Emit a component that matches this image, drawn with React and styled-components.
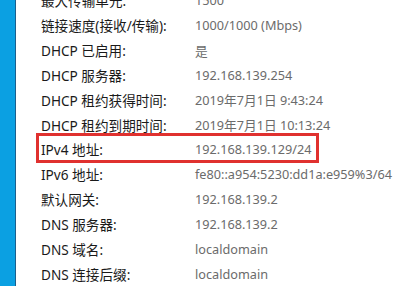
import styled, { createGlobalStyle } from "styled-components";

const GlobalStyle = createGlobalStyle`
  html, body {
    margin: 0;
    padding: 0;
    background: #ffffff;
    overflow: hidden;
  }
  body {
    font-family: "Noto Sans", "Noto Sans CJK SC", sans-serif;
  }
`;

const Window = styled.div`
  width: 406px;
  height: 286px;
  display: flex;
  overflow: hidden;
  background: #ffffff;
`;

const Strip = styled.div`
  width: 15px;
  flex-shrink: 0;
  background: #0ba0e2;
  border-right: 1px solid #1b5f8c;
`;

const Content = styled.div`
  flex: 1;
  display: flex;
  flex-direction: column;
  margin-top: -12px;
  padding-left: 25px;
`;

const Row = styled.div`
  height: 25px;
  display: grid;
  grid-template-columns: 154px 1fr;
  align-items: center;
  position: relative;
  white-space: nowrap;

  ${(props) =>
    props.$marked &&
    `
    &::after {
      content: "";
      position: absolute;
      left: -5px;
      top: -4px;
      width: 283px;
      height: 30px;
      border: 3px solid #e0312f;
      box-sizing: border-box;
    }
  `}
`;

const Label = styled.span`
  font-size: 13.6px;
  color: #1a1a1a;
`;

const Value = styled.span`
  font-size: 12.7px;
  color: #6b6b6b;
`;

const rows = [
  ["最大传输单元:", "1500"],
  ["链接速度(接收/传输):", "1000/1000 (Mbps)"],
  ["DHCP 已启用:", "是"],
  ["DHCP 服务器:", "192.168.139.254"],
  ["DHCP 租约获得时间:", "2019年7月1日 9:43:24"],
  ["DHCP 租约到期时间:", "2019年7月1日 10:13:24"],
  ["IPv4 地址:", "192.168.139.129/24", true],
  ["IPv6 地址:", "fe80::a954:5230:dd1a:e959%3/64"],
  ["默认网关:", "192.168.139.2"],
  ["DNS 服务器:", "192.168.139.2"],
  ["DNS 域名:", "localdomain"],
  ["DNS 连接后缀:", "localdomain"],
];

const App = () => {
  return (
    <Window>
      <GlobalStyle />
      <Strip />
      <Content>
        {rows.map(([label, value, marked]) => (
          <Row key={label} $marked={marked}>
            <Label>{label}</Label>
            <Value>{value}</Value>
          </Row>
        ))}
      </Content>
    </Window>
  );
};

export default App;
